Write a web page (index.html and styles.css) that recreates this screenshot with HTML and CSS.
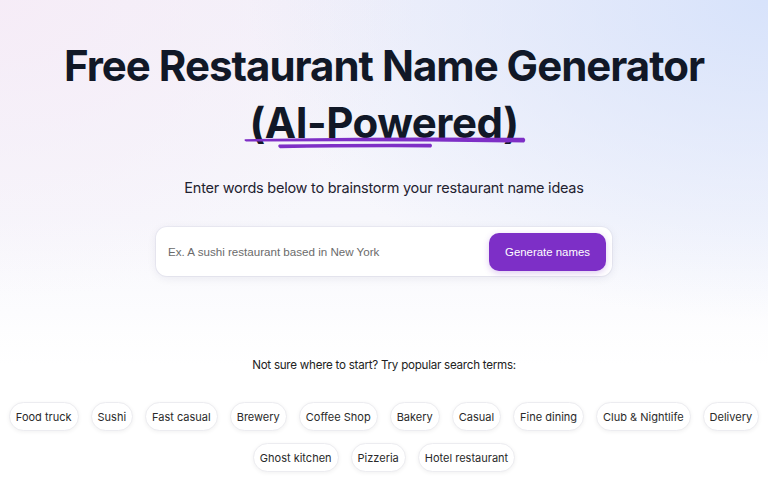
FILE: index.html
```html
<!DOCTYPE html>
<html>
<head>
<meta charset="utf-8">
<link rel="stylesheet" href="styles.css">
</head>
<body>
<main class="page">
  <section class="hero">
    <h1 class="title">
      <span class="line">Free Restaurant Name Generator</span>
      <span class="line accent">(AI-Powered)
        <svg class="underline" viewBox="0 0 286 16" width="286" height="16" aria-hidden="true">
          <path d="M4 4.2 Q120 1.6 283 2.8 Q285.5 5 283 7.6 Q150 5.4 5 6.6 Q2.5 5.4 4 4.2 Z" fill="#7e2fc6"/>
          <path d="M38 9.6 Q110 8.4 190 8.8 Q192 10.6 190 12.4 Q110 12 39 13.2 Q36 11.4 38 9.6 Z" fill="#7e2fc6"/>
        </svg>
      </span>
    </h1>
    <p class="subtitle">Enter words below to brainstorm your restaurant name ideas</p>
    <form class="search">
      <input class="search-input" type="text" placeholder="Ex. A sushi restaurant based in New York">
      <button class="search-btn" type="button">Generate names</button>
    </form>
  </section>
  <section class="popular">
    <p class="popular-label">Not sure where to start? Try popular search terms:</p>
    <div class="chips">
      <span class="chip">Food truck</span>
      <span class="chip">Sushi</span>
      <span class="chip">Fast casual</span>
      <span class="chip">Brewery</span>
      <span class="chip">Coffee Shop</span>
      <span class="chip">Bakery</span>
      <span class="chip">Casual</span>
      <span class="chip">Fine dining</span>
      <span class="chip">Club &amp; Nightlife</span>
      <span class="chip">Delivery</span>
      <span class="chip">Ghost kitchen</span>
      <span class="chip">Pizzeria</span>
      <span class="chip">Hotel restaurant</span>
    </div>
  </section>
</main>
</body>
</html>
```
FILE: styles.css
```css
* { box-sizing: border-box; }
html, body { margin: 0; padding: 0; }
body {
  width: 768px;
  height: 488px;
  overflow: hidden;
  font-family: Inter, "Noto Sans", sans-serif;
  color: #111827;
  background:
    radial-gradient(ellipse 520px 320px at 100% 0%, rgba(214, 226, 251, 0.95), rgba(214, 226, 251, 0) 100%),
    radial-gradient(ellipse 420px 300px at 0% 0%, rgba(246, 236, 247, 0.95), rgba(246, 236, 247, 0) 100%),
    linear-gradient(180deg, #f3f2fa 0%, #f7f7fc 45%, #ffffff 75%);
}
.page {
  display: flex;
  flex-direction: column;
  align-items: center;
}
.hero {
  display: flex;
  flex-direction: column;
  align-items: center;
  padding-top: 37px;
}
.title {
  margin: 0;
  display: flex;
  flex-direction: column;
  align-items: center;
  font-family: Inter, sans-serif;
  font-weight: 700;
  font-size: 42px;
  line-height: 57px;
  letter-spacing: -1px;
  color: #111827;
}
.line { display: block; white-space: nowrap; }
.accent { position: relative; letter-spacing: -0.5px; }
.underline {
  position: absolute;
  left: 50%;
  top: 41px;
  transform: translateX(-50%);
}
.subtitle {
  margin: 27px 0 0;
  font-size: 14.5px;
  line-height: 20px;
  color: #1f2230;
  letter-spacing: -0.25px;
}
.search {
  margin-top: 29px;
  width: 456px;
  height: 49px;
  background: #fff;
  border-radius: 11px;
  box-shadow: 0 2px 10px rgba(30, 30, 80, 0.08), 0 0 0 1px rgba(230, 230, 240, 0.6);
  display: flex;
  align-items: center;
  padding: 5px 6px 5px 12px;
  gap: 8px;
}
.search-input {
  flex: 1;
  border: none;
  outline: none;
  background: transparent;
  font-family: "Liberation Sans", Arial, sans-serif;
  font-size: 11.6px;
  color: #333;
  padding: 0;
}
.search-input::placeholder { color: #6b6b6b; }
.search-btn {
  width: 117px;
  height: 38px;
  border: none;
  border-radius: 10px;
  background: #7d2fc7;
  color: #fff;
  font-family: "Liberation Sans", Arial, sans-serif;
  font-size: 11.4px;
  box-shadow: 0 2px 6px rgba(125, 47, 199, 0.25);
}
.popular {
  margin-top: 81px;
  display: flex;
  flex-direction: column;
  align-items: center;
}
.popular-label {
  margin: 0;
  font-size: 11.6px;
  line-height: 16px;
  color: #222;
  letter-spacing: -0.25px;
}
.chips {
  margin-top: 29px;
  width: 768px;
  padding: 0;
  display: flex;
  flex-wrap: wrap;
  justify-content: center;
  column-gap: 12px;
  row-gap: 12px;
}
.chip {
  height: 29px;
  display: inline-flex;
  align-items: center;
  padding: 0 6px;
  background: #fff;
  border: 1px solid #ececf0;
  border-radius: 15px;
  box-shadow: 0 1px 4px rgba(0, 0, 0, 0.06);
  font-size: 11px;
  color: #2a2a2a;
}
```
